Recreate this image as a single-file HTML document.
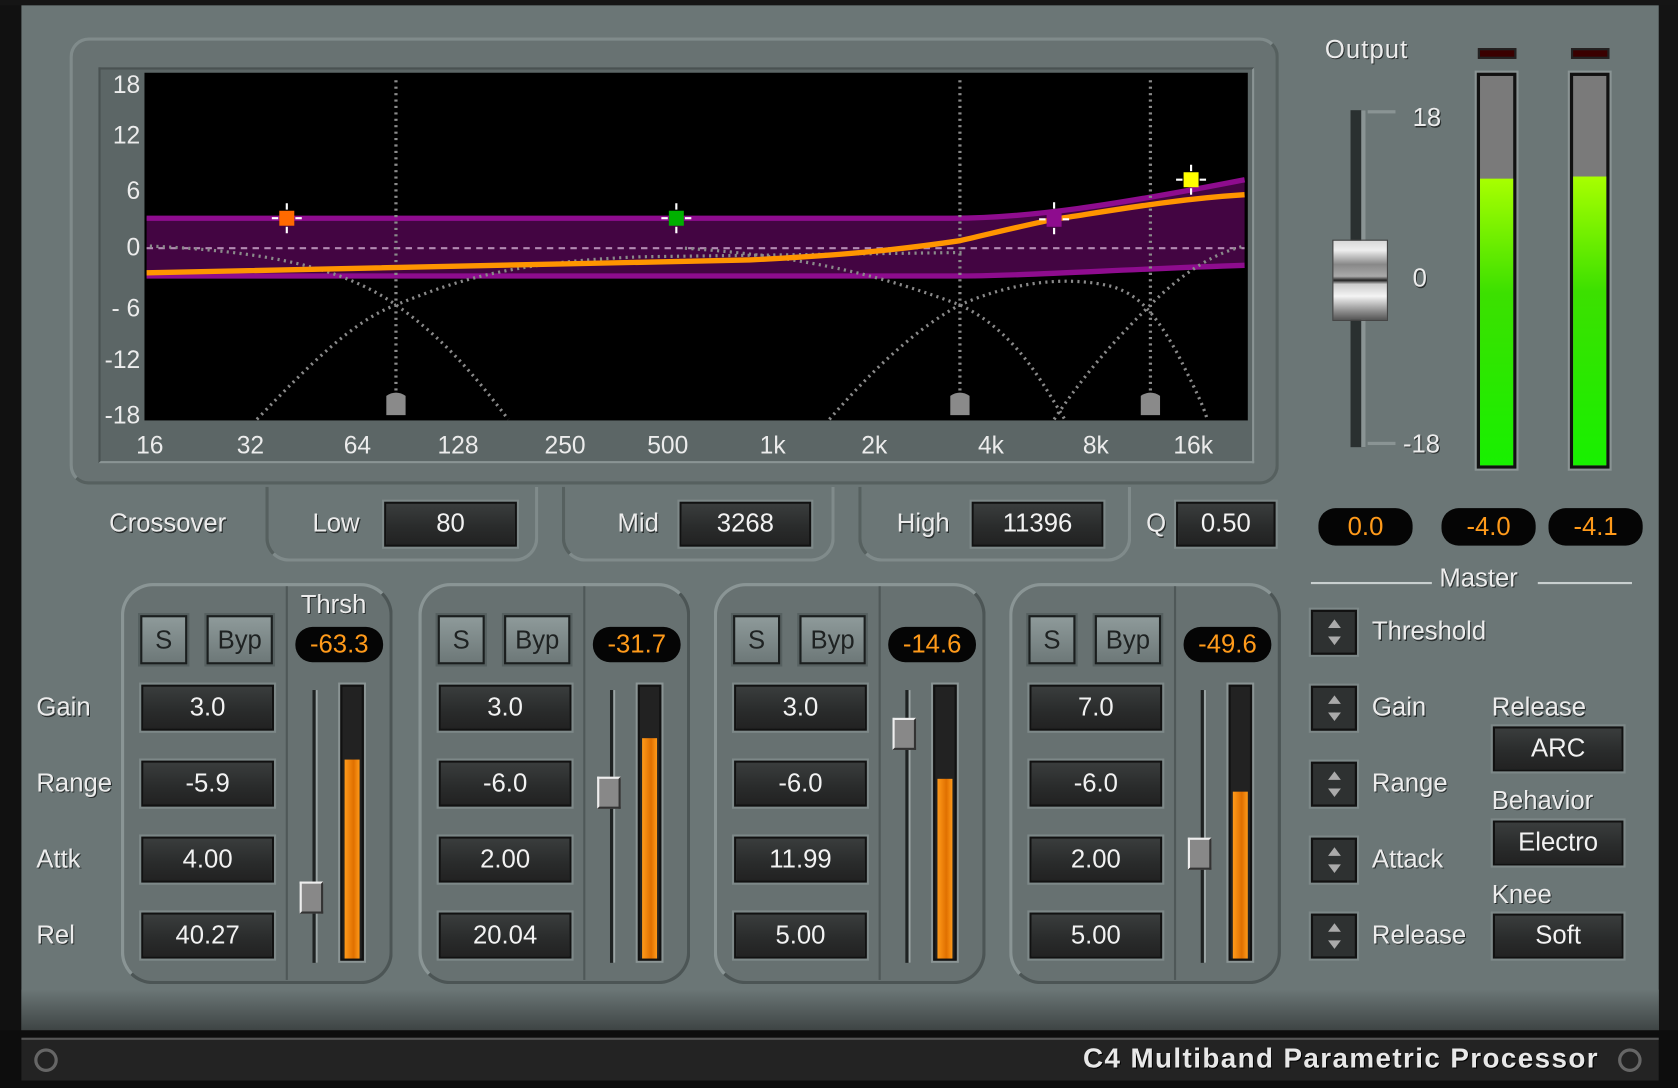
<!DOCTYPE html>
<html><head><meta charset="utf-8"><style>
*{margin:0;padding:0;box-sizing:border-box}
html,body{width:1678px;height:1088px;overflow:hidden;background:#111}
#s{position:absolute;left:0;top:0;width:1568px;height:1017px;transform:scale(1.07015,1.06981);transform-origin:0 0;background:#6b7676;font-family:"Liberation Sans",sans-serif;overflow:hidden}
.a{position:absolute}
.t{position:absolute;color:#ececec;font-size:24px;text-shadow:1px 1px 0 #2a2f2f;white-space:nowrap}
.box{position:absolute;background:linear-gradient(#3a3d3d,#2a2c2c 55%,#222);border:2px solid #111;box-shadow:0 0 0 2px #7d8888;color:#f2f2f2;font-size:24px;text-align:center}
.pill{position:absolute;background:#050505;border-radius:16px;color:#ff9a1a;font-size:24px;text-align:center}
.btn{position:absolute;background:linear-gradient(#8e9a9a,#6d7878);border:2px solid #1a1e1e;box-shadow:0 0 0 2px #566060;color:#1e2222;font-size:24px;text-align:center}
.panel{position:absolute;border-radius:30px;border:3px solid #8a9595;border-right-color:#4c5555;border-bottom-color:#4c5555;background:#677171}
.spin{position:absolute;width:43px;height:42px;background:#2e3131;border:2px solid #111;box-shadow:0 0 0 2px #7d8888}
.spin:before{content:"";position:absolute;left:14px;top:7px;border:6px solid transparent;border-bottom:8px solid #aaa;border-top:0}
.spin:after{content:"";position:absolute;left:14px;top:23px;border:6px solid transparent;border-top:8px solid #aaa;border-bottom:0}
</style></head><body><div id="s">
<div class="a" style="left:0;top:0;width:20px;height:1017px;background:#111"></div>
<div class="a" style="left:1550px;top:0;width:18px;height:1017px;background:#141414"></div>
<div class="a" style="left:0;top:0;width:1568px;height:5px;background:#151515"></div>
<div class="a" style="left:20px;top:925px;width:1530px;height:40px;background:linear-gradient(#6b7676,#3c4242)"></div>
<div class="a" style="left:0;top:963px;width:1568px;height:54px;background:#0d0d0d"></div>
<div class="a" style="left:20px;top:970px;width:1530px;height:40px;background:#232323;border-top:2px solid #555"></div>
<div class="a" style="left:32px;top:980px;width:22px;height:22px;border:3px solid #666;border-radius:50%"></div>
<div class="a" style="left:1512px;top:980px;width:22px;height:22px;border:3px solid #666;border-radius:50%"></div>
<div class="t" style="left:1012px;top:974px;font-size:26px;letter-spacing:1.3px;font-weight:bold;color:#e8e8e8;text-shadow:1px 1px 0 #000">C4 Multiband Parametric Processor</div>

<div class="a" style="left:65px;top:35px;width:1130px;height:418px;border-radius:18px;border:3px solid #808b8b;border-right-color:#56605f;border-bottom-color:#56605f;background:#687272"></div>
<div class="a" style="left:92px;top:63px;width:1080px;height:370px;background:#5c6666;border:2px solid #4a5252;border-bottom-color:#8a9494;border-right-color:#8a9494"></div>
<svg class="a" style="left:0;top:0" width="1568" height="460" viewBox="0 0 1568 460">
<rect x="135" y="68" width="1031" height="325" fill="#000"/>
<path d="M137 203 L890 203 C960 203 1040 190 1163 166 L1163 248 C1040 248 960 258 890 260 L137 260 Z" fill="#430542"/>
<path d="M137 204 L890 204 C960 204 1040 192 1163 168" fill="none" stroke="#8e0c8e" stroke-width="5"/>
<path d="M137 258 L890 258 C960 258 1040 252 1163 248" fill="none" stroke="#8e0c8e" stroke-width="5"/>
<line x1="137" y1="232" x2="1163" y2="232" stroke="#b38ab3" stroke-width="2" stroke-dasharray="6 5"/>
<g fill="none" stroke="#8a8a8a" stroke-width="3" stroke-dasharray="2 4">
<line x1="370" y1="75" x2="370" y2="370"/><line x1="897" y1="75" x2="897" y2="370"/><line x1="1075" y1="75" x2="1075" y2="370"/>
<path d="M140 230 C250 235 320 250 370 285 C420 320 450 360 475 392"/>
<path d="M240 392 C290 340 330 300 370 285 C420 265 470 245 600 240 L900 236"/>
<path d="M640 232 C760 240 830 260 897 285 C950 310 975 360 995 392"/>
<path d="M775 392 C820 340 860 305 897 285 C950 262 1000 258 1040 268 C1060 275 1075 285 1100 330 C1115 360 1125 380 1128 392"/>
<path d="M985 392 C1020 340 1050 310 1075 285 C1110 250 1140 235 1163 230"/>
</g>
<path d="M137 255 C300 252 500 247 700 243 C800 238 850 232 897 225 C940 215 960 210 985 205 C1050 195 1100 186 1163 182" fill="none" stroke="#ff9500" stroke-width="5"/>
<g fill="#8a8a8a"><path d="M361 388 L361 370 Q370 364 379 370 L379 388Z"/><path d="M888 388 L888 370 Q897 364 906 370 L906 388Z"/><path d="M1066 388 L1066 370 Q1075 364 1084 370 L1084 388Z"/></g>
<g stroke="#fff" stroke-width="2">
<path d="M268 190v6M268 212v6M254 204h6M276 204h6"/><path d="M632 190v6M632 212v6M618 204h6M640 204h6"/>
<path d="M985 189v6M985 213v6M971 205h6M993 205h6"/><path d="M1113 154v6M1113 176v6M1099 168h6M1121 168h6"/></g>
<rect x="261" y="197" width="14" height="14" fill="#ff6a00"/><rect x="625" y="197" width="14" height="14" fill="#00b000"/>
<rect x="978" y="198" width="14" height="14" fill="#8e0c8e"/><rect x="1106" y="161" width="14" height="14" fill="#ffff00"/>
<g fill="#ececec" font-family="Liberation Sans" font-size="23" text-anchor="end">
<text x="131" y="87">18</text><text x="131" y="134">12</text><text x="131" y="186">6</text><text x="131" y="239">0</text><text x="131" y="296">- 6</text><text x="131" y="344">-12</text><text x="131" y="396">-18</text></g>
<g fill="#ececec" font-family="Liberation Sans" font-size="23" text-anchor="middle">
<text x="140" y="424">16</text><text x="234" y="424">32</text><text x="334" y="424">64</text><text x="428" y="424">128</text><text x="528" y="424">250</text><text x="624" y="424">500</text><text x="722" y="424">1k</text><text x="817" y="424">2k</text><text x="926" y="424">4k</text><text x="1024" y="424">8k</text><text x="1115" y="424">16k</text></g>
</svg>

<div class="t" style="left:102px;top:476px">Crossover</div>
<div class="a" style="left:248px;top:455px;width:255px;height:70px;border:3px solid #808b8b;border-top:0;border-radius:0 0 22px 22px;border-color:#56605f #808b8b #808b8b #56605f"></div>
<div class="a" style="left:525px;top:455px;width:255px;height:70px;border:3px solid #808b8b;border-top:0;border-radius:0 0 22px 22px;border-color:#56605f #808b8b #808b8b #56605f"></div>
<div class="a" style="left:802px;top:455px;width:255px;height:70px;border:3px solid #808b8b;border-top:0;border-radius:0 0 22px 22px;border-color:#56605f #808b8b #808b8b #56605f"></div>
<div class="t" style="left:292px;top:476px">Low</div><div class="box" style="left:359px;top:469px;width:124px;height:42px;line-height:38px">80</div>
<div class="t" style="left:577px;top:476px">Mid</div><div class="box" style="left:635px;top:469px;width:123px;height:42px;line-height:38px">3268</div>
<div class="t" style="left:838px;top:476px">High</div><div class="box" style="left:908px;top:469px;width:123px;height:42px;line-height:38px">11396</div>
<div class="t" style="left:1071px;top:476px">Q</div><div class="box" style="left:1099px;top:469px;width:93px;height:42px;line-height:38px">0.50</div>

<div class="t" style="left:1238px;top:33px;letter-spacing:1px">Output</div>
<div class="a" style="left:1262px;top:103px;width:14px;height:315px;background:#2a3030;border-right:4px solid #8a9494"></div>
<div class="a" style="left:1278px;top:103px;width:26px;height:3px;background:#8a9494"></div>
<div class="a" style="left:1278px;top:413px;width:26px;height:3px;background:#8a9494"></div>
<div class="a" style="left:1245px;top:224px;width:52px;height:76px;background:linear-gradient(#d8d8d8,#eee 12%,#888 30%,#aaa 45%,#222 50%,#ccc 55%,#f4f4f4 70%,#888 90%,#555);border:1px solid #444"></div>
<div class="t" style="left:1320px;top:97px">18</div><div class="t" style="left:1320px;top:247px">0</div><div class="t" style="left:1311px;top:402px">-18</div>
<div class="a" style="left:1381px;top:45px;width:36px;height:10px;background:#3a0000;border:2px solid #222"></div>
<div class="a" style="left:1468px;top:45px;width:36px;height:10px;background:#3a0000;border:2px solid #222"></div>
<div class="a" style="left:1380px;top:68px;width:37px;height:370px;background:#7a7a7a;border:3px solid #111;box-shadow:0 0 0 2px #8a9494"><div class="a" style="left:0;bottom:0;width:100%;height:268px;background:linear-gradient(#a8ff00,#3ce000 40%,#18f000)"></div></div>
<div class="a" style="left:1467px;top:68px;width:37px;height:370px;background:#7a7a7a;border:3px solid #111;box-shadow:0 0 0 2px #8a9494"><div class="a" style="left:0;bottom:0;width:100%;height:270px;background:linear-gradient(#a8ff00,#3ce000 40%,#18f000)"></div></div>
<div class="pill" style="left:1232px;top:475px;width:88px;height:35px;line-height:36px">0.0</div>
<div class="pill" style="left:1347px;top:475px;width:88px;height:35px;line-height:36px">-4.0</div>
<div class="pill" style="left:1447px;top:475px;width:88px;height:35px;line-height:36px">-4.1</div>

<div class="a" style="left:1225px;top:544px;width:113px;height:2px;background:#c8cfcf"></div>
<div class="a" style="left:1437px;top:544px;width:88px;height:2px;background:#c8cfcf"></div>
<div class="t" style="left:1345px;top:527px">Master</div>
<div class="spin" style="left:1225px;top:570px"></div><div class="t" style="left:1282px;top:577px">Threshold</div>
<div class="spin" style="left:1225px;top:641px"></div><div class="t" style="left:1282px;top:648px">Gain</div>
<div class="spin" style="left:1225px;top:712px"></div><div class="t" style="left:1282px;top:719px">Range</div>
<div class="spin" style="left:1225px;top:783px"></div><div class="t" style="left:1282px;top:790px">Attack</div>
<div class="spin" style="left:1225px;top:854px"></div><div class="t" style="left:1282px;top:861px">Release</div>
<div class="t" style="left:1394px;top:648px">Release</div><div class="box" style="left:1395px;top:679px;width:122px;height:42px;line-height:38px">ARC</div>
<div class="t" style="left:1394px;top:735px">Behavior</div><div class="box" style="left:1395px;top:767px;width:122px;height:42px;line-height:38px">Electro</div>
<div class="t" style="left:1394px;top:823px">Knee</div><div class="box" style="left:1395px;top:854px;width:122px;height:42px;line-height:38px">Soft</div>

<div class="t" style="left:34px;top:648px">Gain</div>
<div class="t" style="left:34px;top:719px">Range</div>
<div class="t" style="left:34px;top:790px">Attk</div>
<div class="t" style="left:34px;top:861px">Rel</div>

<div class="panel" style="left:113px;top:545px;width:254px;height:375px"></div>
<div class="a" style="left:267px;top:548px;width:2px;height:368px;background:#4f5858"></div>
<div class="btn" style="left:131px;top:575px;width:44px;height:46px;line-height:44px">S</div>
<div class="btn" style="left:193px;top:575px;width:62px;height:46px;line-height:44px">Byp</div>
<div class="t" style="left:281px;top:552px">Thrsh</div>
<div class="pill" style="left:276px;top:586px;width:82px;height:33px;line-height:34px">-63.3</div>
<div class="box" style="left:132px;top:640px;width:124px;height:43px;line-height:40px">3.0</div>
<div class="box" style="left:132px;top:711px;width:124px;height:43px;line-height:40px">-5.9</div>
<div class="box" style="left:132px;top:782px;width:124px;height:43px;line-height:40px">4.00</div>
<div class="box" style="left:132px;top:853px;width:124px;height:43px;line-height:40px">40.27</div>
<div class="a" style="left:292px;top:645px;width:5px;height:255px;background:#1e2222;border-right:2px solid #9aa4a4"></div>
<div class="a" style="left:280px;top:824px;width:22px;height:30px;background:#888;border:2px solid #eee;border-right-color:#333;border-bottom-color:#333"></div>
<div class="a" style="left:318px;top:640px;width:22px;height:258px;background:#222;border:2px solid #111;box-shadow:0 0 0 2px #8a9494"><div class="a" style="left:2px;bottom:0;width:14px;height:186px;background:linear-gradient(90deg,#ff9a1a,#e07000 60%,#ff9a1a)"></div></div>

<div class="panel" style="left:391px;top:545px;width:254px;height:375px"></div>
<div class="a" style="left:545px;top:548px;width:2px;height:368px;background:#4f5858"></div>
<div class="btn" style="left:409px;top:575px;width:44px;height:46px;line-height:44px">S</div>
<div class="btn" style="left:471px;top:575px;width:62px;height:46px;line-height:44px">Byp</div>
<div class="pill" style="left:554px;top:586px;width:82px;height:33px;line-height:34px">-31.7</div>
<div class="box" style="left:410px;top:640px;width:124px;height:43px;line-height:40px">3.0</div>
<div class="box" style="left:410px;top:711px;width:124px;height:43px;line-height:40px">-6.0</div>
<div class="box" style="left:410px;top:782px;width:124px;height:43px;line-height:40px">2.00</div>
<div class="box" style="left:410px;top:853px;width:124px;height:43px;line-height:40px">20.04</div>
<div class="a" style="left:570px;top:645px;width:5px;height:255px;background:#1e2222;border-right:2px solid #9aa4a4"></div>
<div class="a" style="left:558px;top:726px;width:22px;height:30px;background:#888;border:2px solid #eee;border-right-color:#333;border-bottom-color:#333"></div>
<div class="a" style="left:596px;top:640px;width:22px;height:258px;background:#222;border:2px solid #111;box-shadow:0 0 0 2px #8a9494"><div class="a" style="left:2px;bottom:0;width:14px;height:206px;background:linear-gradient(90deg,#ff9a1a,#e07000 60%,#ff9a1a)"></div></div>

<div class="panel" style="left:667px;top:545px;width:254px;height:375px"></div>
<div class="a" style="left:821px;top:548px;width:2px;height:368px;background:#4f5858"></div>
<div class="btn" style="left:685px;top:575px;width:44px;height:46px;line-height:44px">S</div>
<div class="btn" style="left:747px;top:575px;width:62px;height:46px;line-height:44px">Byp</div>
<div class="pill" style="left:830px;top:586px;width:82px;height:33px;line-height:34px">-14.6</div>
<div class="box" style="left:686px;top:640px;width:124px;height:43px;line-height:40px">3.0</div>
<div class="box" style="left:686px;top:711px;width:124px;height:43px;line-height:40px">-6.0</div>
<div class="box" style="left:686px;top:782px;width:124px;height:43px;line-height:40px">11.99</div>
<div class="box" style="left:686px;top:853px;width:124px;height:43px;line-height:40px">5.00</div>
<div class="a" style="left:846px;top:645px;width:5px;height:255px;background:#1e2222;border-right:2px solid #9aa4a4"></div>
<div class="a" style="left:834px;top:671px;width:22px;height:30px;background:#888;border:2px solid #eee;border-right-color:#333;border-bottom-color:#333"></div>
<div class="a" style="left:872px;top:640px;width:22px;height:258px;background:#222;border:2px solid #111;box-shadow:0 0 0 2px #8a9494"><div class="a" style="left:2px;bottom:0;width:14px;height:168px;background:linear-gradient(90deg,#ff9a1a,#e07000 60%,#ff9a1a)"></div></div>

<div class="panel" style="left:943px;top:545px;width:254px;height:375px"></div>
<div class="a" style="left:1097px;top:548px;width:2px;height:368px;background:#4f5858"></div>
<div class="btn" style="left:961px;top:575px;width:44px;height:46px;line-height:44px">S</div>
<div class="btn" style="left:1023px;top:575px;width:62px;height:46px;line-height:44px">Byp</div>
<div class="pill" style="left:1106px;top:586px;width:82px;height:33px;line-height:34px">-49.6</div>
<div class="box" style="left:962px;top:640px;width:124px;height:43px;line-height:40px">7.0</div>
<div class="box" style="left:962px;top:711px;width:124px;height:43px;line-height:40px">-6.0</div>
<div class="box" style="left:962px;top:782px;width:124px;height:43px;line-height:40px">2.00</div>
<div class="box" style="left:962px;top:853px;width:124px;height:43px;line-height:40px">5.00</div>
<div class="a" style="left:1122px;top:645px;width:5px;height:255px;background:#1e2222;border-right:2px solid #9aa4a4"></div>
<div class="a" style="left:1110px;top:783px;width:22px;height:30px;background:#888;border:2px solid #eee;border-right-color:#333;border-bottom-color:#333"></div>
<div class="a" style="left:1148px;top:640px;width:22px;height:258px;background:#222;border:2px solid #111;box-shadow:0 0 0 2px #8a9494"><div class="a" style="left:2px;bottom:0;width:14px;height:156px;background:linear-gradient(90deg,#ff9a1a,#e07000 60%,#ff9a1a)"></div></div>
</div></body></html>
